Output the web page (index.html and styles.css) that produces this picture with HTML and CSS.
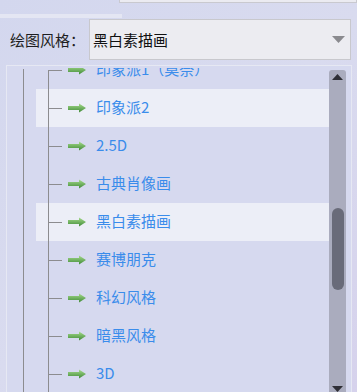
FILE: index.html
```html
<!DOCTYPE html>
<html lang="zh-CN">
<head>
    <meta charset="UTF-8">
    <title>绘图风格</title>
    <link rel="stylesheet" href="styles.css">
</head>
<body>
    <div class="top-stub"></div>
    <div class="stripe"></div>

    <div class="style-row">
        <span class="style-label">绘图风格：</span>
        <div class="select">
            <span class="select-value">黑白素描画</span>
            <svg class="select-caret" width="13" height="7" viewBox="0 0 13 7"><polygon points="0,0 13,0 6.5,7" fill="#8a8a8f"/></svg>
        </div>
    </div>

    <div class="panel">
        <div class="tree">
            <div class="tree-inner">
                <div class="node first"><span class="twig"></span><svg class="arrow" width="18" height="10" viewBox="0 0 18 10"><defs><linearGradient id="g1" x1="0" y1="0" x2="0" y2="1"><stop offset="0" stop-color="#a6db8c"/><stop offset="1" stop-color="#3f8a37"/></linearGradient></defs><polygon points="0,3 11,3 11,0.5 18,5 11,9.5 11,7 0,7" fill="url(#g1)"/></svg><span class="label">印象派1（莫奈）</span></div>
                <div class="node selected"><span class="twig"></span><svg class="arrow" width="18" height="10" viewBox="0 0 18 10"><polygon points="0,3 11,3 11,0.5 18,5 11,9.5 11,7 0,7" fill="url(#g1)"/></svg><span class="label">印象派2</span></div>
                <div class="node"><span class="twig"></span><svg class="arrow" width="18" height="10" viewBox="0 0 18 10"><polygon points="0,3 11,3 11,0.5 18,5 11,9.5 11,7 0,7" fill="url(#g1)"/></svg><span class="label">2.5D</span></div>
                <div class="node"><span class="twig"></span><svg class="arrow" width="18" height="10" viewBox="0 0 18 10"><polygon points="0,3 11,3 11,0.5 18,5 11,9.5 11,7 0,7" fill="url(#g1)"/></svg><span class="label">古典肖像画</span></div>
                <div class="node selected"><span class="twig"></span><svg class="arrow" width="18" height="10" viewBox="0 0 18 10"><polygon points="0,3 11,3 11,0.5 18,5 11,9.5 11,7 0,7" fill="url(#g1)"/></svg><span class="label">黑白素描画</span></div>
                <div class="node"><span class="twig"></span><svg class="arrow" width="18" height="10" viewBox="0 0 18 10"><polygon points="0,3 11,3 11,0.5 18,5 11,9.5 11,7 0,7" fill="url(#g1)"/></svg><span class="label">赛博朋克</span></div>
                <div class="node"><span class="twig"></span><svg class="arrow" width="18" height="10" viewBox="0 0 18 10"><polygon points="0,3 11,3 11,0.5 18,5 11,9.5 11,7 0,7" fill="url(#g1)"/></svg><span class="label">科幻风格</span></div>
                <div class="node"><span class="twig"></span><svg class="arrow" width="18" height="10" viewBox="0 0 18 10"><polygon points="0,3 11,3 11,0.5 18,5 11,9.5 11,7 0,7" fill="url(#g1)"/></svg><span class="label">暗黑风格</span></div>
                <div class="node"><span class="twig"></span><svg class="arrow" width="18" height="10" viewBox="0 0 18 10"><polygon points="0,3 11,3 11,0.5 18,5 11,9.5 11,7 0,7" fill="url(#g1)"/></svg><span class="label">3D</span></div>
            </div>
        </div>
        <div class="scrollbar">
            <svg class="scroll-btn" width="11" height="6" viewBox="0 0 11 6"><polygon points="0,6 11,6 5.5,0" fill="#2f2f36"/></svg>
            <div class="scroll-track">
                <div class="scroll-thumb"></div>
            </div>
            <svg class="scroll-btn" width="11" height="6" viewBox="0 0 11 6"><polygon points="0,0 11,0 5.5,6" fill="#2f2f36"/></svg>
        </div>
    </div>
</body>
</html>
```

FILE: styles.css
```css
html, body {
    height: 100%;
}

body {
    margin: 0;
    font-family: "Noto Sans CJK SC", "Noto Sans", sans-serif;
    background: linear-gradient(135deg, #d3d7ee 0%, #d9dbef 50%, #d6d2ec 100%);
    overflow: hidden;
}

.top-stub {
    margin-left: 119px;
    height: 2px;
    background: #ebebf1;
    border: 1px solid #c9c9cf;
    border-top: none;
}

.stripe {
    width: 122px;
    height: 4px;
    margin-top: 11px;
    background: #e4e6f3;
}

.style-row {
    display: flex;
    align-items: center;
    margin-top: 1px;
}

.style-label {
    width: 79px;
    padding-left: 10px;
    font-size: 15px;
    color: #1e1e22;
}

.select {
    width: 260px;
    height: 39px;
    display: flex;
    align-items: center;
    justify-content: space-between;
    background: #ececf1;
    border: 1px solid #c8c8cd;
}

.select-value {
    padding-left: 3px;
    font-size: 15px;
    color: #111;
}

.select-caret {
    margin-right: 5px;
}

.panel {
    display: flex;
    height: 330px;
    margin: 5px 5px 0 6px;
    background: #d6d9ef;
    border: 1px solid #e6e8f3;
    border-bottom: none;
    overflow: hidden;
}

.tree {
    flex: 1;
    margin-top: 2px;
    padding-left: 29px;
    background: linear-gradient(#8c8c8f, #8c8c8f) 16px 1px / 1px 100% no-repeat;
    overflow: hidden;
}

.tree-inner {
    margin-top: -17px;
}

.node {
    display: flex;
    align-items: center;
    height: 38px;
}

.node.selected {
    background: #eceef7;
}

.twig {
    align-self: stretch;
    width: 14px;
    margin-left: 12px;
    margin-right: 6px;
    background:
        linear-gradient(#8c8c8f, #8c8c8f) 0 0 / 1px 100% no-repeat,
        linear-gradient(#8c8c8f, #8c8c8f) 0 50% / 14px 1px no-repeat;
}

.node.first .twig {
    background:
        linear-gradient(#8c8c8f, #8c8c8f) 0 100% / 1px 50% no-repeat,
        linear-gradient(#8c8c8f, #8c8c8f) 0 50% / 14px 1px no-repeat;
}

.arrow {
    margin-right: 10px;
}

.label {
    font-size: 15px;
    line-height: 18px;
    padding-bottom: 2px;
    color: #3a8ceb;
    white-space: nowrap;
}

.scrollbar {
    display: flex;
    flex-direction: column;
    align-items: center;
    width: 17px;
    margin: 4px 5px 0 0;
    background: #aaacbe;
    border-radius: 3px 3px 0 0;
}

.scroll-btn {
    margin: 4px 0;
}

.scroll-track {
    flex: 1;
    width: 100%;
    padding-top: 124px;
}

.scroll-thumb {
    width: 12px;
    height: 82px;
    margin: 0 auto;
    background: #696b79;
    border-radius: 6px;
}
```
